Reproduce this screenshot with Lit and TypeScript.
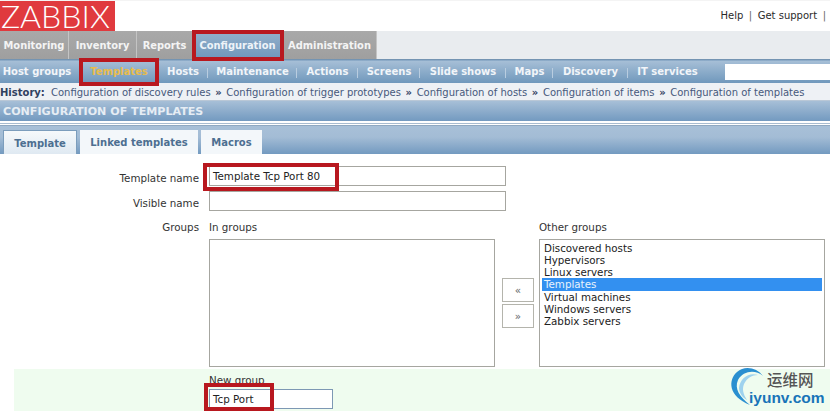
import { LitElement, html, css, svg } from "lit";
import { customElement } from "lit/decorators.js";

const mainTabs = [
  { t: "Monitoring", w: 69 },
  { t: "Inventory", w: 68 },
  { t: "Reports", w: 56 },
  { t: "Configuration", w: 90, sel: true },
  { t: "Administration", w: 94 },
];
const subItems: { t: string; w: number; on?: boolean; sep?: boolean }[] = [
  { t: "Host groups", w: 74 },
  { t: "Templates", w: 78, on: true },
  { t: "Hosts", w: 50, sep: true },
  { t: "Maintenance", w: 89, sep: true },
  { t: "Actions", w: 61, sep: true },
  { t: "Screens", w: 62, sep: true },
  { t: "Slide shows", w: 86, sep: true },
  { t: "Maps", w: 47, sep: true },
  { t: "Discovery", w: 75, sep: true },
  { t: "IT services", w: 79 },
];
const history = [
  "Configuration of discovery rules",
  "Configuration of trigger prototypes",
  "Configuration of hosts",
  "Configuration of items",
  "Configuration of templates",
];
const others = ["Discovered hosts", "Hypervisors", "Linux servers", "Templates", "Virtual machines", "Windows servers", "Zabbix servers"];

@customElement("app-root")
export class AppRoot extends LitElement {
  static styles = css`
    :host { display: block; position: relative; width: 830px; height: 413px; overflow: hidden; background: #fff;
      font-family: "DejaVu Sans", sans-serif; font-size: 10px; color: #222; }
    .top { height: 31px; display: flex; justify-content: space-between; box-sizing: border-box; border-top: 1px solid #f4f4f4; }
    .logo { width: 115px; height: 30px; background: #e03a3e; color: #fff; font: 300 32px/30px "Lato", sans-serif; padding-left: 1px; box-sizing: border-box; white-space: nowrap; }
    .user { display: flex; gap: 5.5px; padding: 9px 4px 0 0; font-size: 10px; color: #2a2a2a; }
    .user i { font-style: normal; color: #666; }
    .main { height: 28px; background: #e9ecef; display: flex; }
    .mt { display: flex; align-items: center; justify-content: center; box-sizing: border-box; background: linear-gradient(#a9a9a9, #9f9f9f); color: #f4f4f4; font-weight: 700; font-size: 9.9px; border-right: 1px solid #c4c4c4; }
    .mt.sel { background: linear-gradient(#94b0cb, #6f97bb); color: #eef3f8; }
    .sub { height: 24px; background: linear-gradient(#7fa0c0 0, #a5bed6 6%, #7098bc 100%); border-top: 1px solid #7494b2; box-sizing: border-box; display: flex; align-items: center; color: #f2f5f9; font-weight: 700; font-size: 10px; }
    .si { box-sizing: border-box; display: flex; justify-content: center; position: relative; }
    .si.on { color: #e8bc4c; margin-left: 6px; }
    .si.sep::after { content: ""; position: absolute; right: 0; top: 2px; height: 10px; width: 1px; background: #b9cde0; }
    .search { width: 105px; height: 16px; background: #fff; margin-left: auto; }
    .hist { height: 18px; background: #eef1f5; display: flex; align-items: center; gap: 4.6px; padding-top: 1px; color: #47597c; font-size: 10px; white-space: nowrap; border-bottom: 1px solid #b9c7d6; box-sizing: border-box; }
    .hist b { color: #30405f; margin-right: 1.5px; }
    .hist span { color: #30405f; font-size: 10px; font-weight: 700; }
    .title { height: 20px; background: linear-gradient(#a7bfd7, #739ac0); color: #e6edf4; font-weight: 700; font-size: 11.1px; line-height: 21px; padding-left: 3px; }
    .rule { height: 1px; margin: 2px 0 1px; background: #a8bcd0; }
    .tabs { height: 29px; background: linear-gradient(#a8c0d8, #a3bcd5 40%, #739ac0); margin-top: 1px; border-top: 1px solid #8fa9c2; display: flex; align-items: flex-end; gap: 3px; padding-left: 3px; box-sizing: border-box; }
    .tab { height: 24px; padding-top: 1px; display: flex; align-items: center; justify-content: center; background: #f3f7fa; color: #4d6f91; font-weight: 700; font-size: 10px; box-sizing: border-box; }
    .tab.sel { background: linear-gradient(#f6f9fb, #dfe9f2); border: 1px solid #7c9dbc; border-bottom: 0; width: 74px; }
    .tab.linked { width: 118px; }
    .tab.macros { width: 61px; }
    .form { display: grid; grid-template-columns: 199px 1fr; column-gap: 10px; padding-top: 12px; font-size: 10.3px; }
    .lab { text-align: right; color: #333; line-height: 19px; height: 20px; padding-top: 3px; box-sizing: border-box; }
    .inp { width: 297px; height: 20px; box-sizing: border-box; border: 1px solid #a6a6a0; padding: 0 3px; line-height: 19px; color: #222; background: #fff; }
    .gap5 { margin-top: 5px; }
    .lab.grp { margin-top: 4px; }
    .groups { display: flex; margin-top: 10px; }
    .col { display: flex; flex-direction: column; }
    .cap { height: 18px; line-height: 12px; color: #333; }
    .lst { width: 286px; height: 128px; box-sizing: border-box; border: 1px solid #a6a6a0; background: #fff; padding: 2px 2px; color: #222; }
    .opt { height: 12px; line-height: 12px; padding-left: 2px; }
    .opt.sel { background: #3390f0; color: #e9f3fc; height: 13px; line-height: 13px; }
    .btns { width: 44px; box-sizing: border-box; display: flex; flex-direction: column; align-items: flex-start; gap: 2px; padding: 57px 0 0 7px; }
    .btn { width: 32px; height: 24px; box-sizing: border-box; border: 1px solid #b4b4ac; color: #666; display: flex; align-items: center; justify-content: center; background: #fff; }
    .new { position: absolute; left: 14px; right: 0; top: 369px; height: 42px; background: #effcef; display: grid; grid-template-columns: 185px 1fr; column-gap: 10px; font-size: 10.3px; }
    .new .cap { margin-top: 5px; height: 15px; }
    .new .inp { width: 124px; border-color: #7d98b4; }
    .mark { position: absolute; border: 4px solid #b8181f; box-sizing: border-box; pointer-events: none; }
    .m1 { left: 192px; top: 30px; width: 92px; height: 31px; }
    .m2 { left: 79px; top: 58px; width: 80px; height: 28px; }
    .m3 { left: 203px; top: 163px; width: 136px; height: 28px; }
    .m4 { left: 204px; top: 383px; width: 70px; height: 28px; }
    .wm { position: absolute; left: 725px; top: 365px; width: 105px; height: 48px; }
    .wm-cn { position: absolute; left: 42px; top: 6px; font: 500 15.5px/17px "Noto Sans CJK SC", sans-serif; color: #555; white-space: nowrap; }
    .wm-en { position: absolute; left: 24px; top: 24px; font: 700 15.5px/17px "Liberation Sans", sans-serif; color: #1874b8; white-space: nowrap; }
  `;

  render() {
    return html`
      <div class="top">
        <div class="logo">ZABBIX</div>
        <div class="user"><span>Help</span><i>|</i><span>Get support</span><i>|</i></div>
      </div>
      <div class="main">
        ${mainTabs.map((m) => html`<div class="mt ${m.sel ? "sel" : ""}" style="width:${m.w}px">${m.t}</div>`)}
      </div>
      <div class="sub">
        ${subItems.map((s) => html`<div class="si ${s.on ? "on" : ""} ${s.sep ? "sep" : ""}" style="width:${s.w}px">${s.t}</div>`)}
        <div class="search"></div>
      </div>
      <div class="hist">
        <b>History:</b>
        ${history.map((h, i) => html`${i ? html`<span>»</span>` : ""}<a>${h}</a>`)}
      </div>
      <div class="title">CONFIGURATION OF TEMPLATES</div>
      <div class="rule"></div>
      <div class="tabs">
        <div class="tab sel">Template</div>
        <div class="tab linked">Linked templates</div>
        <div class="tab macros">Macros</div>
      </div>
      <div class="form">
        <div class="lab">Template name</div>
        <div class="inp">Template Tcp Port 80</div>
        <div class="lab gap5">Visible name</div>
        <div class="inp gap5"></div>
        <div class="lab grp">Groups</div>
        <div class="groups">
          <div class="col"><div class="cap">In groups</div><div class="lst"></div></div>
          <div class="btns"><div class="btn">«</div><div class="btn">»</div></div>
          <div class="col"><div class="cap">Other groups</div>
            <div class="lst">${others.map((o) => html`<div class="opt ${o === "Templates" ? "sel" : ""}">${o}</div>`)}</div>
          </div>
        </div>
      </div>
      <div class="new">
        <div></div>
        <div><div class="cap">New group</div><div class="inp">Tcp Port</div></div>
      </div>
      <div class="mark m1"></div><div class="mark m2"></div><div class="mark m3"></div><div class="mark m4"></div>
      <div class="wm">
        <svg width="105" height="48" viewBox="0 0 105 48">
          ${svg`<path d="M38 11 C32 3 20 0 12 7 C3 15 3 31 25 40 C15 32 9 24 13 15 C18 6 30 4 38 11Z" fill="#2a8fd0"/>
          <path d="M33 10 C24 7 15 13 14 23 C14 28 18 33 22 35 C18 29 17 24 19 19 C22 13 27 10 33 10Z" fill="#9ed2ee"/>`}
        </svg>
        <div class="wm-cn">运维网</div>
        <div class="wm-en">iyunv.com</div>
      </div>
    `;
  }
}
